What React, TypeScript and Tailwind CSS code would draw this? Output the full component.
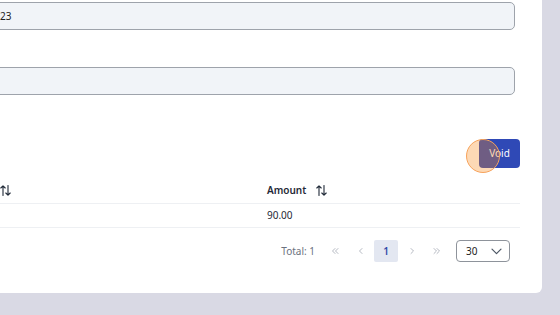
import React from "react";

const SortIcon: React.FC = () => (
  <svg width="11" height="11" viewBox="0 0 11 11" fill="none" stroke="#1f2937" strokeWidth="1.1" strokeLinecap="round" strokeLinejoin="round">
    <path d="M3 10.5V0.8M0.8 3L3 0.8L5.2 3" />
    <path d="M8 0.5V10.2M5.8 8L8 10.2L10.2 8" />
  </svg>
);

const Chevron: React.FC<{ d: string }> = ({ d }) => (
  <svg width="10" height="10" viewBox="0 0 10 10" fill="none" stroke="#b5b9c2" strokeWidth="1" strokeLinecap="round" strokeLinejoin="round">
    <path d={d} />
  </svg>
);

const App: React.FC = () => {
  return (
    <div className="w-[560px] h-[315px] overflow-hidden bg-[#d9d9e4] font-['Noto_Sans',sans-serif]">
      <div className="-ml-[240px] w-[782px] h-[293px] bg-white rounded-br-[6px] px-[22px] pt-[2px] flex flex-col">
        <div className="flex mr-[5px]">
          <div className="w-[208px]" />
          <div className="flex-1 h-[28px] bg-[#f1f4f8] border border-[#9ea3ab] rounded-[5px] pl-[9px] flex items-center text-[10px] text-[#222]">
            23
          </div>
        </div>
        <div className="flex mr-[5px] mt-[37px]">
          <div className="w-[208px]" />
          <div className="flex-1 h-[28px] bg-[#f1f4f8] border border-[#9ea3ab] rounded-[5px]" />
        </div>

        <div className="flex justify-end mt-[44px]">
          <div className="relative">
            <button className="w-[41px] h-[29px] bg-[#2f49b6] rounded-[4px] text-white text-[10px] font-normal">
              Void
            </button>
            <div className="absolute left-[-13px] top-[0px] w-[34px] h-[34px] rounded-full bg-[rgba(249,136,24,0.32)] border border-[#f7a35c]" />
          </div>
        </div>

        <div className="mt-[10px] grid grid-cols-[485px_1fr] text-[10px] text-[#1f2937]">
          <div className="h-[26px] flex items-center border-b border-[#eef0f3] font-semibold">
            <span className="w-[208px]" />
            <span className="ml-[10px]"><SortIcon /></span>
          </div>
          <div className="h-[26px] flex items-center border-b border-[#eef0f3] font-semibold">
            <span>Amount</span>
            <span className="ml-[10px]"><SortIcon /></span>
          </div>
          <div className="h-[24px] flex items-center border-b border-[#eef0f3]" />
          <div className="h-[24px] flex items-center border-b border-[#eef0f3]">90.00</div>
        </div>

        <div className="mt-[12px] flex items-center justify-end pr-[10px] text-[10px]">
          <span className="text-[#6b7280]">Total: 1</span>
          <div className="ml-[8px] flex items-center gap-[1.5px]">
            <div className="w-[24px] h-[22px] flex items-center justify-center">
              <Chevron d="M5 2.5L2.5 5L5 7.5M8 2.5L5.5 5L8 7.5" />
            </div>
            <div className="w-[24px] h-[22px] flex items-center justify-center">
              <Chevron d="M6 2.5L3.5 5L6 7.5" />
            </div>
            <div className="w-[24px] h-[22px] flex items-center justify-center bg-[#e3e7f1] rounded-[2px] text-[#3347a8] font-semibold">
              1
            </div>
            <div className="w-[24px] h-[22px] flex items-center justify-center">
              <Chevron d="M4 2.5L6.5 5L4 7.5" />
            </div>
            <div className="w-[24px] h-[22px] flex items-center justify-center">
              <Chevron d="M2 2.5L4.5 5L2 7.5M5 2.5L7.5 5L5 7.5" />
            </div>
          </div>
          <div className="ml-[7px] w-[54px] h-[22px] border border-[#8e939b] rounded-[4px] flex items-center justify-between pl-[9px] pr-[7px] text-[#222]">
            <span>30</span>
            <svg width="11" height="7" viewBox="0 0 11 7" fill="none" stroke="#4b5563" strokeWidth="1.2" strokeLinecap="round" strokeLinejoin="round">
              <path d="M1 1.2L5.5 5.7L10 1.2" />
            </svg>
          </div>
        </div>
      </div>
    </div>
  );
};

export default App;
